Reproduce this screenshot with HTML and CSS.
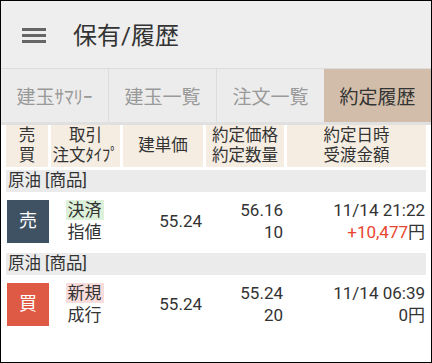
FILE: index.html
```html
<!DOCTYPE html>
<html lang="ja">
<head>
<meta charset="UTF-8" />
<meta name="viewport" content="width=device-width, initial-scale=1.0" />
<title>保有/履歴</title>
<link rel="stylesheet" href="styles.css">
</head>
<body>
<div class="screen">
  <header class="appbar">
    <svg class="menu" width="24" height="16" viewBox="0 0 24 16">
      <rect x="0" y="0" width="24" height="3" fill="#666" />
      <rect x="0" y="6" width="24" height="3" fill="#666" />
      <rect x="0" y="12" width="24" height="3" fill="#666" />
    </svg>
    <h1 class="title">保有/履歴</h1>
  </header>

  <nav class="tabs">
    <div class="tab">建玉ｻﾏﾘｰ</div>
    <div class="tab">建玉一覧</div>
    <div class="tab">注文一覧</div>
    <div class="tab active">約定履歴</div>
  </nav>
  <div class="shade"></div>

  <main class="content">
    <div class="grid head">
      <div class="cell">売<br>買</div>
      <div class="cell">取引<br>注文ﾀｲﾌﾟ</div>
      <div class="cell">建単価</div>
      <div class="cell">約定価格<br>約定数量</div>
      <div class="cell">約定日時<br>受渡金額</div>
    </div>

    <div class="group">原油 [商品]</div>
    <div class="grid row">
      <div class="side"><span class="badge sell">売</span></div>
      <div class="type"><span class="tag close">決済</span><br>指値</div>
      <div class="num">55.24</div>
      <div class="num">56.16<br>10</div>
      <div class="num">11/14 21:22<br><span class="plus">+10,477</span>円</div>
    </div>

    <div class="group">原油 [商品]</div>
    <div class="grid row">
      <div class="side"><span class="badge buy">買</span></div>
      <div class="type"><span class="tag open">新規</span><br>成行</div>
      <div class="num">55.24</div>
      <div class="num">55.24<br>20</div>
      <div class="num">11/14 06:39<br>0円</div>
    </div>
  </main>
</div>
</body>
</html>
```

FILE: styles.css
```css
* {
margin: 0;
padding: 0;
box-sizing: border-box;
}

body {
font-family: "Roboto", "Noto Sans CJK JP", sans-serif;
color: #333;
background: #fff;
}

.screen {
width: 432px;
height: 363px;
border: 1px solid #000;
overflow: hidden;
}

.appbar {
height: 67px;
background-color: #eeeeee;
display: flex;
align-items: center;
padding-left: 21px;
}

.menu {
display: block;
margin-top: 2px;
}

.title {
font-size: 24px;
font-weight: normal;
margin-left: 27px;
margin-bottom: 3px;
color: #333;
}

.tabs {
display: grid;
grid-template-columns: 107px 108px 108px 107px;
height: 54px;
border-top: 1px solid #dcdcdc;
background-color: #ececec;
}

.tab {
display: flex;
align-items: center;
justify-content: center;
font-size: 19px;
color: #999;
border-left: 1px solid #dcdcdc;
}

.tab:first-child {
border-left: 0;
}

.tab.active {
background-color: #d1bda9;
color: #333;
border-left: 0;
}

.shade {
height: 3px;
background-color: #e0e0e0;
}

.content {
padding: 0 5px;
}

.grid {
display: grid;
grid-template-columns: 42px 69px 80px 78px 139px;
column-gap: 3px;
}

.head {
height: 42px;
}

.head .cell {
background-color: #f5ede2;
font-size: 16.5px;
line-height: 20px;
text-align: center;
display: flex;
align-items: center;
justify-content: center;
}

.group {
margin-top: 3px;
height: 22px;
line-height: 22px;
background-color: #ebebeb;
font-size: 16.5px;
padding-left: 2px;
}

.row {
height: 58px;
align-items: center;
font-size: 17px;
line-height: 22px;
}

.side {
padding-left: 1px;
}

.badge {
display: flex;
width: 42px;
height: 43px;
align-items: center;
justify-content: center;
color: #fff;
font-size: 18px;
}

.sell {
background-color: #3e5264;
}

.buy {
background-color: #df5a44;
}

.type {
text-align: center;
padding-right: 2px;
}

.tag {
padding: 0 2px;
}

.close {
background-color: #dcf0da;
}

.open {
background-color: #f9dcdc;
}

.num {
text-align: right;
padding-right: 1px;
}

.plus {
color: #e8452f;
}
```
